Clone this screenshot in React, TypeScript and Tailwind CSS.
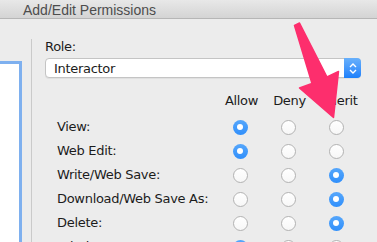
const rows: { label: string; value: number }[] = [
  { label: "View:", value: 0 },
  { label: "Web Edit:", value: 0 },
  { label: "Write/Web Save:", value: 2 },
  { label: "Download/Web Save As:", value: 2 },
  { label: "Delete:", value: 2 },
  { label: "Admin:", value: 0 },
];

function Radio({ on }: { on: boolean }) {
  if (on) {
    return (
      <span className="flex h-[15px] w-[15px] items-center justify-center rounded-full bg-gradient-to-b from-[#55a6fb] to-[#2f8ffb]">
        <span className="h-[6px] w-[6px] rounded-full bg-white" />
      </span>
    );
  }
  return (
    <span className="h-[15px] w-[15px] rounded-full border border-[#b3b3b3] bg-gradient-to-b from-white to-[#f7f7f7]" />
  );
}

export default function App() {
  return (
    <div
      className="relative flex h-[242px] w-[377px] flex-col overflow-hidden bg-[#ececec] text-[13px] tracking-[-0.3px] text-[#1c1c1c]"
      style={{ fontFamily: '"DejaVu Sans", sans-serif' }}
    >
      <div
        className="h-[19px] shrink-0 border-b border-[#b6b6b6] bg-gradient-to-b from-[#e8e8e8] to-[#d4d4d4] pl-[23px] pt-[2px] text-[14px] leading-[16px] tracking-normal text-[#4d4d4d]"
        style={{ fontFamily: '"Liberation Sans", Arial, sans-serif' }}
      >
        Add/Edit Permissions
      </div>

      <div className="flex flex-1">
        <div className="w-[31px] shrink-0 pt-[42px]">
          <div className="h-full w-[22px] border-r-[3px] border-t-[3px] border-[#7eb0ef] bg-white" />
        </div>
        <div className="mt-[20px] w-px shrink-0 bg-[#cacaca]" />

        <div className="flex-1 pl-[13px] pr-[16px] pt-[20px]">
          <div className="leading-[16px]">Role:</div>
          <div className="mt-[3px] flex h-[20px] rounded-[4px] border border-[#c4c4c4] bg-white shadow-[0_1px_0_rgba(0,0,0,0.05)]">
            <div className="flex-1 pl-[8px] pt-[1px] leading-[17px]">Interactor</div>
            <div className="-my-px -mr-px flex w-[17px] flex-col items-center justify-center gap-[1px] rounded-r-[4px] bg-gradient-to-b from-[#68b0fb] to-[#1b80fb]">
              <svg width="8" height="5" viewBox="0 0 8 5">
                <path d="M1 4 L4 1 L7 4" fill="none" stroke="white" strokeWidth="1.4" />
              </svg>
              <svg width="8" height="5" viewBox="0 0 8 5">
                <path d="M1 1 L4 4 L7 1" fill="none" stroke="white" strokeWidth="1.4" />
              </svg>
            </div>
          </div>

          <div className="ml-[12px] mt-[15px] grid grid-cols-[159px_48px_48px_48px] leading-[16px]">
            <div />
            <div className="pl-[3px] text-center">Allow</div>
            <div className="pl-[3px] text-center">Deny</div>
            <div className="pl-[3px] text-center">Inherit</div>
          </div>

          <div className="ml-[12px] mt-[6px]">
            {rows.map((r) => (
              <div
                key={r.label}
                className="grid h-[24px] grid-cols-[159px_48px_48px_48px] items-center leading-[16px]"
              >
                <div className="whitespace-nowrap">{r.label}</div>
                {[0, 1, 2].map((i) => (
                  <div key={i} className="flex justify-center">
                    <Radio on={r.value === i} />
                  </div>
                ))}
              </div>
            ))}
          </div>
        </div>
      </div>

      <svg
        className="pointer-events-none absolute left-0 top-0"
        width="377"
        height="242"
        viewBox="0 0 377 242"
      >
        <polygon
          points="294.5,25.5 299.5,23 327,77 338.5,71.5 333.5,117.5 299.5,88 312,83.5"
          fill="#fd2e6d"
          stroke="#fd2e6d"
          strokeWidth="1.5"
          strokeLinejoin="round"
        />
      </svg>
    </div>
  );
}
